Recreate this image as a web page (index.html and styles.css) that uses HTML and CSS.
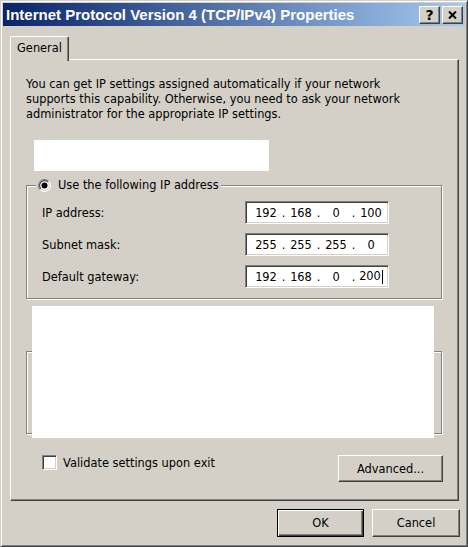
FILE: index.html
```html
<!DOCTYPE html>
<html>
<head>
<meta charset="utf-8">
<title>Internet Protocol Version 4 (TCP/IPv4) Properties</title>
<link rel="stylesheet" href="styles.css">
</head>
<body>
<div class="window">
  <div class="titlebar">
    <span class="title">Internet Protocol Version 4 (TCP/IPv4) Properties</span>
    <div class="caption-btns">
      <button class="cbtn help">?</button>
      <button class="cbtn close"><svg width="9" height="8" viewBox="0 0 9 8"><path d="M1 0.5 L8 7.5 M8 0.5 L1 7.5" stroke="#000" stroke-width="2" fill="none"/></svg></button>
    </div>
  </div>
  <div class="client">
    <div class="tabs"><div class="tab">General</div></div>
    <div class="panel">
      <p class="intro">You can get IP settings assigned automatically if your network<br>supports this capability. Otherwise, you need to ask your network<br>administrator for the appropriate IP settings.</p>
      <div class="blank blank-top"></div>
      <div class="group">
        <div class="legend">
          <svg class="radio" width="13" height="13" viewBox="0 0 12 12">
            <circle cx="6" cy="6" r="5.5" fill="#fff"/>
            <path d="M2.1 9.9 A5.5 5.5 0 0 1 9.9 2.1" stroke="#808080" fill="none"/>
            <path d="M2.8 9.2 A4.5 4.5 0 0 1 9.2 2.8" stroke="#404040" fill="none"/>
            <path d="M9.9 2.1 A5.5 5.5 0 0 1 2.1 9.9" stroke="#fff" fill="none"/>
            <path d="M9.2 2.8 A4.5 4.5 0 0 1 2.8 9.2" stroke="#d4d0c8" fill="none"/>
            <circle cx="6" cy="6" r="2.8" fill="#000"/>
          </svg>
          <span>Use the following IP address</span>
        </div>
        <div class="fields">
          <span class="label">IP address:</span>
          <div class="ipbox"><span class="seg">192</span><span class="dot">.</span><span class="seg">168</span><span class="dot">.</span><span class="seg">0</span><span class="dot">.</span><span class="seg">100</span></div>
          <span class="label">Subnet mask:</span>
          <div class="ipbox"><span class="seg">255</span><span class="dot">.</span><span class="seg">255</span><span class="dot">.</span><span class="seg">255</span><span class="dot">.</span><span class="seg">0</span></div>
          <span class="label">Default gateway:</span>
          <div class="ipbox"><span class="seg">192</span><span class="dot">.</span><span class="seg">168</span><span class="dot">.</span><span class="seg">0</span><span class="dot">.</span><span class="seg">200<span class="caret"></span></span></div>
        </div>
      </div>
      <div class="lower">
        <div class="group group2"></div>
        <div class="blank blank-cover"></div>
      </div>
      <div class="bottom">
        <label class="check"><span class="checkbox"></span><span>Validate settings upon exit</span></label>
        <button class="btn advanced">Advanced...</button>
      </div>
    </div>
    <div class="actions">
      <button class="btn default ok">OK</button>
      <button class="btn cancel">Cancel</button>
    </div>
  </div>
</div>
</body>
</html>
```
FILE: styles.css
```css
html, body {
  margin: 0;
  padding: 0;
}
body {
  width: 468px;
  height: 547px;
  background: #d4d0c8;
  font-family: "DejaVu Sans", sans-serif;
  font-size: 11.4px;
  color: #000;
}
.window {
  box-sizing: border-box;
  width: 468px;
  height: 547px;
  border: 1px solid;
  border-color: #d4d0c8 #404040 #404040 #d4d0c8;
  box-shadow: inset 1px 1px 0 #fff, inset -1px -1px 0 #808080;
  padding: 2px;
  display: flex;
  flex-direction: column;
  background: #d4d0c8;
}
.titlebar {
  height: 23px;
  flex: none;
  background: linear-gradient(to right, #0a246a, #a6caf0);
  display: flex;
  align-items: center;
  justify-content: space-between;
  padding: 0 2px 0 3px;
}
.title {
  color: #fff;
  font-family: "Liberation Sans", Arial, sans-serif;
  font-weight: bold;
  font-size: 15px;
  white-space: nowrap;
}
.caption-btns {
  display: flex;
  gap: 2px;
}
.cbtn {
  box-sizing: border-box;
  width: 21px;
  height: 18px;
  padding: 0;
  margin: 0;
  background: #d4d0c8;
  border: 1px solid;
  border-color: #fff #404040 #404040 #fff;
  box-shadow: inset -1px -1px 0 #808080;
  display: flex;
  align-items: center;
  justify-content: center;
  font-family: "DejaVu Sans", sans-serif;
  font-weight: bold;
  font-size: 14px;
  color: #000;
}
.client {
  flex: 1;
  display: flex;
  flex-direction: column;
  padding: 10px 5px 0 7px;
}
.tabs {
  display: flex;
  height: 23px;
}
.tab {
  box-sizing: border-box;
  width: 59px;
  height: 25px;
  position: relative;
  z-index: 1;
  background: #d4d0c8;
  border-left: 1px solid #fff;
  border-top: 1px solid #fff;
  border-right: 1px solid #404040;
  box-shadow: inset -1px 0 0 #808080;
  border-top-left-radius: 2px;
  border-top-right-radius: 2px;
  display: flex;
  align-items: center;
  justify-content: center;
  padding-bottom: 2px;
}
.panel {
  box-sizing: border-box;
  width: 449px;
  height: 442px;
  border-left: 1px solid #fff;
  border-top: 1px solid #fff;
  border-right: 1px solid #404040;
  border-bottom: 1px solid #404040;
  box-shadow: inset -1px -1px 0 #808080;
  padding: 17px 16px 0 15px;
  display: flex;
  flex-direction: column;
}
.intro {
  margin: 0;
  line-height: 15px;
}
.blank {
  background: #fff;
}
.blank-top {
  width: 235px;
  height: 31px;
  margin: 18px 0 0 8px;
}
.group {
  box-sizing: border-box;
  border: 1px solid #808080;
  box-shadow: 1px 1px 0 #fff, inset 1px 1px 0 #fff;
  display: flex;
  flex-direction: column;
}
.group:not(.group2) {
  height: 114px;
  margin-top: 14px;
}
.legend {
  align-self: flex-start;
  height: 16px;
  margin: -9px 0 0 9px;
  padding: 0 2px;
  background: #d4d0c8;
  display: flex;
  align-items: center;
  gap: 7px;
}
.radio {
  display: block;
}
.fields {
  display: grid;
  grid-template-columns: 1fr 144px;
  row-gap: 9px;
  margin-top: 8px;
  padding: 0 52px 0 15px;
}
.label {
  align-self: center;
}
.ipbox {
  box-sizing: border-box;
  width: 144px;
  height: 23px;
  background: #fff;
  border: 1px solid;
  border-color: #808080 #fff #fff #808080;
  box-shadow: inset 1px 1px 0 #404040, inset -1px -1px 0 #d4d0c8;
  display: flex;
  align-items: center;
  padding-left: 6px;
}
.seg {
  width: 28px;
  text-align: center;
  white-space: nowrap;
}
.dot {
  width: 7px;
  text-align: center;
}
.caret {
  display: inline-block;
  width: 1px;
  height: 14px;
  background: #000;
  vertical-align: middle;
  margin-left: 1px;
}
.lower {
  position: relative;
  margin-top: 7px;
}
.group2 {
  margin-top: 45px;
  height: 83px;
}
.blank-cover {
  position: absolute;
  left: 6px;
  top: 0;
  width: 402px;
  height: 132px;
}
.bottom {
  margin-top: 21px;
  display: flex;
  justify-content: space-between;
  align-items: flex-start;
}
.check {
  display: flex;
  align-items: center;
  gap: 6px;
  margin-left: 16px;
}
.checkbox {
  box-sizing: border-box;
  width: 15px;
  height: 15px;
  background: #fff;
  border: 1px solid;
  border-color: #808080 #fff #fff #808080;
  box-shadow: inset 1px 1px 0 #404040, inset -1px -1px 0 #d4d0c8;
}
.btn {
  box-sizing: border-box;
  margin: 0;
  padding: 0;
  background: #d4d0c8;
  border: 1px solid;
  border-color: #fff #404040 #404040 #fff;
  box-shadow: inset -1px -1px 0 #808080;
  font-family: "DejaVu Sans", sans-serif;
  font-size: 11.4px;
  color: #000;
}
.advanced {
  width: 105px;
  height: 27px;
  margin-right: -1px;
}
.actions {
  margin-top: 8px;
  display: flex;
  justify-content: flex-end;
  gap: 8px;
}
.ok {
  width: 87px;
  height: 28px;
}
.cancel {
  width: 88px;
  height: 28px;
}
.default {
  border: 1px solid #000;
  box-shadow: inset 1px 1px 0 #fff, inset -1px -1px 0 #404040, inset -2px -2px 0 #808080;
}
```
